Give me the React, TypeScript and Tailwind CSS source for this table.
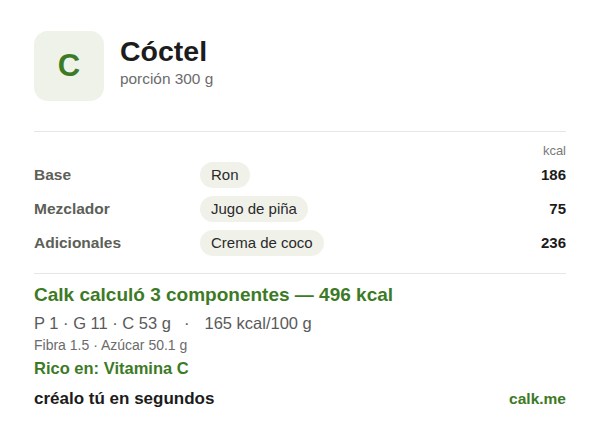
const rows = [
  { label: "Base", item: "Ron", kcal: 186 },
  { label: "Mezclador", item: "Jugo de piña", kcal: 75 },
  { label: "Adicionales", item: "Crema de coco", kcal: 236 },
];

const App = () => {
  return (
    <div className="w-[600px] h-[422px] bg-white px-[34px] pt-[31px] font-['Liberation_Sans',Arial,sans-serif]">
      {/* Header */}
      <div className="flex items-start gap-4">
        <div className="w-[70px] h-[70px] rounded-[14px] bg-[#eff2e9] flex items-center justify-center text-[31px] font-bold text-[#3d7a26]">
          C
        </div>
        <div className="pt-[4px]">
          <h1 className="text-[28.5px] leading-[33px] font-bold text-[#1c1c1c]">Cóctel</h1>
          <p className="text-[15.4px] leading-[18px] mt-[2px] text-[#6b6b6b]">porción 300 g</p>
        </div>
      </div>

      <div className="mt-[30px] border-t border-[#e6e6e6]" />

      {/* Components */}
      <div className="pt-[11px] text-right text-[13px] leading-[15px] text-[#7a7a7a]">kcal</div>
      <div className="flex flex-col gap-[8px] mt-[4px]">
        {rows.map((r) => (
          <div key={r.label} className="flex items-center h-[26px]">
            <span className="w-[166px] text-[15.5px] font-bold text-[#5c6057]">{r.label}</span>
            <span className="px-[11px] h-[26px] flex items-center rounded-full bg-[#f0f2ea] text-[15px] text-[#2a2a2a]">
              {r.item}
            </span>
            <span className="ml-auto text-[15px] font-bold text-[#1c1c1c]">{r.kcal}</span>
          </div>
        ))}
      </div>

      <div className="mt-[17px] border-t border-[#e6e6e6]" />

      {/* Summary */}
      <p className="mt-[9px] text-[19px] leading-[24px] font-bold text-[#3d7a26]">
        Calk calculó 3 componentes — 496 kcal
      </p>
      <p className="mt-[6px] flex text-[16.5px] leading-[20px] text-[#5a5a5a]">
        <span>P 1 · G 11 · C 53 g</span>
        <span className="ml-[13px] mr-[15px]">·</span>
        <span>165 kcal/100 g</span>
      </p>
      <p className="mt-[4px] text-[14px] leading-[16px] text-[#6b6b6b]">Fibra 1.5 · Azúcar 50.1 g</p>
      <p className="mt-[5px] text-[16.5px] leading-[20px] font-bold text-[#3d7a26]">Rico en: Vitamina C</p>

      <div className="mt-[10.5px] flex items-center justify-between leading-[20px]">
        <span className="text-[17px] font-bold text-[#1c1c1c]">créalo tú en segundos</span>
        <span className="text-[15.5px] font-bold text-[#3d7a26]">calk.me</span>
      </div>
    </div>
  );
};

export default App;
